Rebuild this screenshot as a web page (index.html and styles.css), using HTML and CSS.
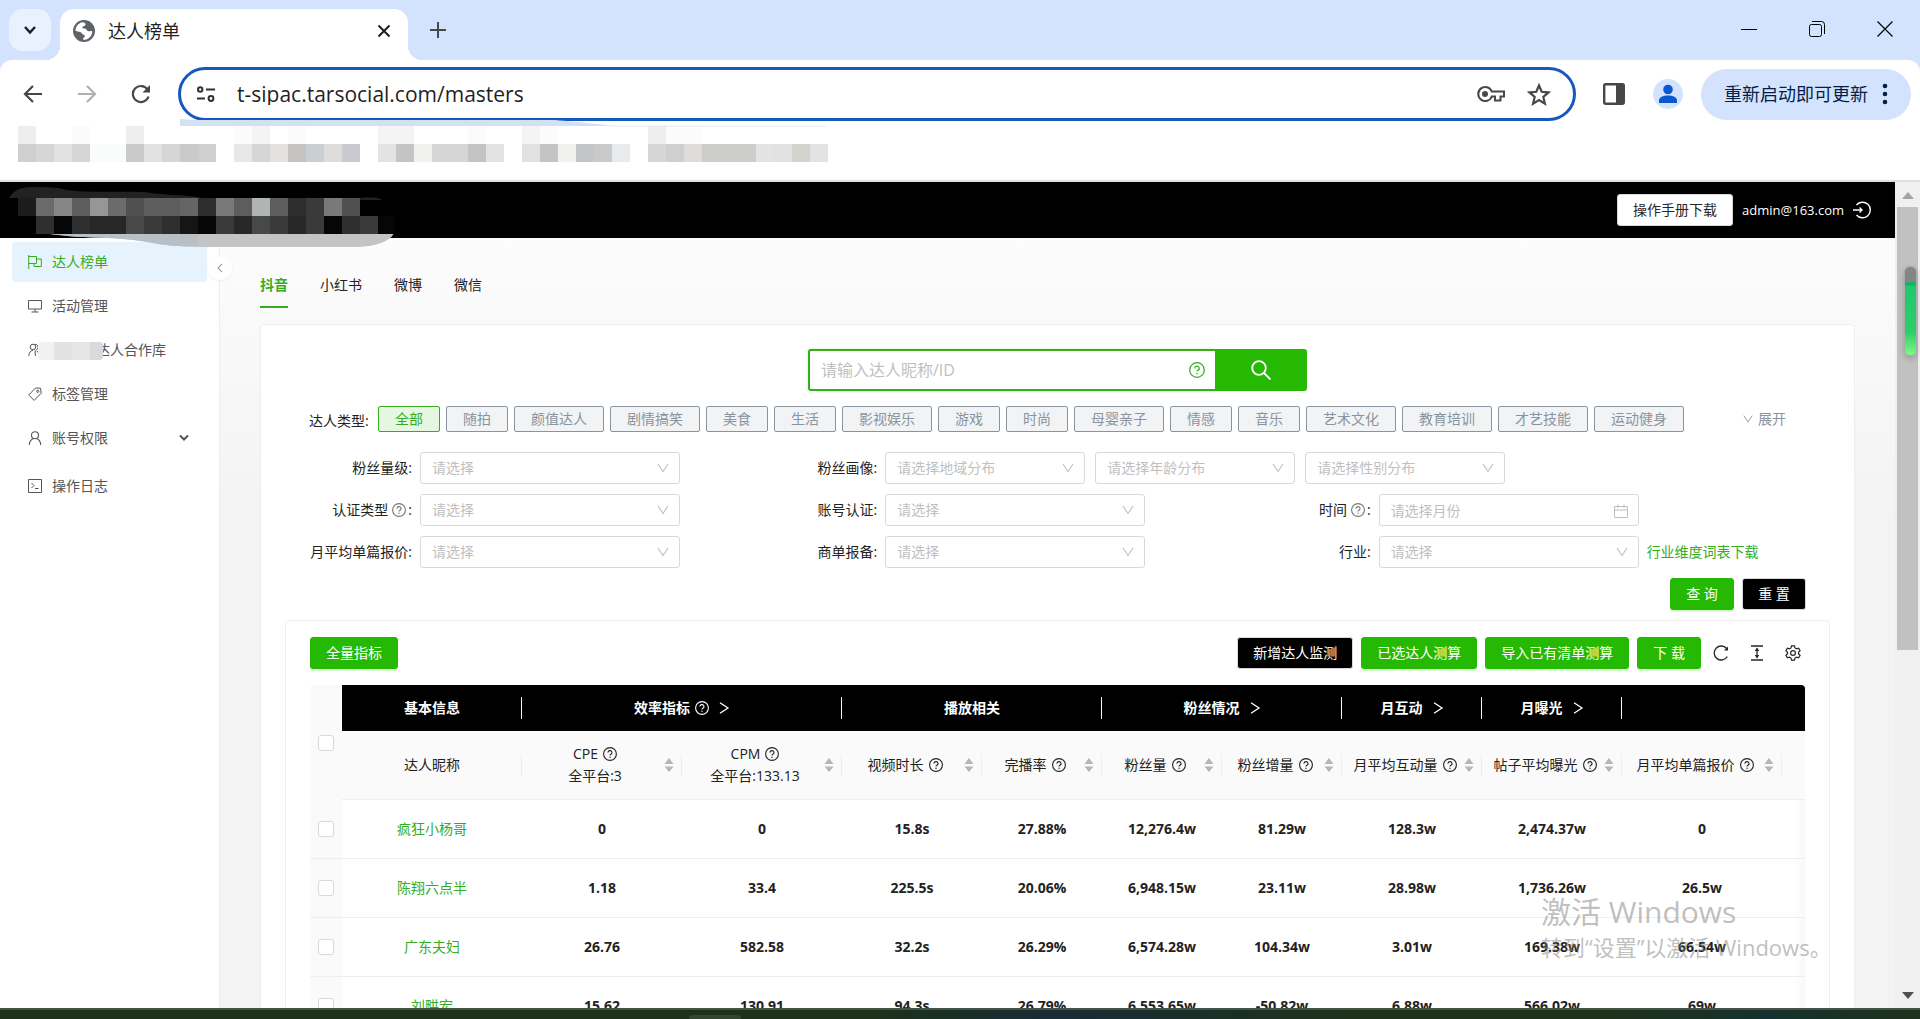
FILE: index.html
```html
<!DOCTYPE html>
<html lang="zh-CN">
<head>
<meta charset="utf-8">
<title>达人榜单</title>
<link rel="stylesheet" href="styles.css">
</head>
<body>
<svg class="defs" aria-hidden="true">
  <symbol id="help" viewBox="0 0 14 14"><circle cx="7" cy="7" r="6.4" fill="none" stroke="currentColor" stroke-width="1.1"/><path d="M5 5.6a2 1.9 0 1 1 2.9 1.6c-.6.3-.9.6-.9 1.2" fill="none" stroke="currentColor" stroke-width="1.1"/><circle cx="7" cy="10.3" r=".7" fill="currentColor"/></symbol>
  <symbol id="down" viewBox="0 0 12 12"><path d="M1 2l5 7.600 5-7.600" fill="none" stroke="currentColor" stroke-width="1.1"/></symbol>
  <symbol id="right" viewBox="0 0 12 12"><path d="M2 .8L10 6l-8 5.200" fill="none" stroke="currentColor" stroke-width="1.3"/></symbol>
  <symbol id="sort" viewBox="0 0 10 16"><path d="M5 1l4.500 6h-9zM5 15l4.500-5.500h-9z" fill="#b5b5b5"/></symbol>
</svg>

<div class="tabstrip">
  <button class="tab-search" aria-label="搜索标签页"><svg width="14" height="10" viewBox="0 0 14 10"><path d="M2 2l5 5.500L12 2" fill="none" stroke="#1f1f1f" stroke-width="2.500"/></svg></button>
  <div class="browser-tab">
    <svg width="22" height="22" viewBox="0 0 22 22"><circle cx="11" cy="11" r="11" fill="#5f6368"/><path d="M9.500 2.200c3 .6 3.700 1.800 2.500 3.200-.9 1-2.600.6-2.600 2.100 0 1.600 2.600.6 3.900 1.700.9.800.5 2 2.200 2 1.500 0 2.500-.8 3.800.2-.2 4.500-4 8.400-8.600 8.400-1.200-.3-.8-1.500.2-2.300 1.700-1.200.9-2.700-.7-3.100-1.500-.4-1.400-2-3-2.500-1.300-.4-3.100.2-4.800-1.300C2.800 6 5.600 2.800 9.500 2.200z" fill="#fff"/></svg>
    <span class="tab-title">达人榜单</span>
    <button class="icon-btn" aria-label="关闭标签页"><svg width="14" height="14" viewBox="0 0 14 14"><path d="M1.500 1.500l11 11M12.500 1.500l-11 11" stroke="#1f1f1f" stroke-width="2"/></svg></button>
  </div>
  <button class="new-tab" aria-label="新标签页"><svg width="16" height="16" viewBox="0 0 16 16"><path d="M8 0v16M0 8h16" stroke="#474747" stroke-width="2"/></svg></button>
  <div class="win-controls">
    <button aria-label="最小化"><svg width="16" height="16" viewBox="0 0 16 16"><path d="M0 8.500h16" stroke="#000"/></svg></button>
    <button aria-label="还原"><svg width="16" height="16" viewBox="0 0 16 16"><rect x=".5" y="3.500" width="12" height="12" rx="2" fill="none" stroke="#000"/><path d="M3 .5h9.500a3 3 0 0 1 3 3V13" fill="none" stroke="#000"/></svg></button>
    <button aria-label="关闭"><svg width="16" height="16" viewBox="0 0 16 16"><path d="M.5.500l15 15M15.500.500l-15 15" stroke="#000" stroke-width="1.200"/></svg></button>
  </div>
</div>

<div class="browser-bar">
  <div class="toolbar">
    <button class="nav-btn" aria-label="后退"><svg width="20" height="18" viewBox="0 0 20 18"><path d="M19 9H2M10 1L2 9l8 8" fill="none" stroke="#474747" stroke-width="2.200"/></svg></button>
    <button class="nav-btn" aria-label="前进"><svg width="20" height="18" viewBox="0 0 20 18"><path d="M1 9h17M10 1l8 8-8 8" fill="none" stroke="#b0b0b0" stroke-width="2.200"/></svg></button>
    <button class="nav-btn" aria-label="重新加载"><svg width="20" height="20" viewBox="0 0 20 20"><path d="M17.500 12.500A8 8 0 1 1 16.500 5.500" fill="none" stroke="#474747" stroke-width="2.200"/><path d="M19 1v7.500h-7.500z" fill="#474747"/></svg></button>
    <div class="omnibox">
      <svg width="18" height="18" viewBox="0 0 18 18" fill="none" stroke="#303030" stroke-width="2"><circle cx="3.200" cy="4.500" r="2.200"/><path d="M9 4.500h9M0 13.500h8"/><circle cx="14" cy="13.500" r="2.400"/></svg>
      <input class="url" type="text" aria-label="地址" value="t-sipac.tarsocial.com/masters">
      <button class="icon-btn" aria-label="密码"><svg width="28" height="18" viewBox="0 0 28 18"><path d="M14.800 6.500A7 7 0 1 0 14.800 11.500H18v4h5.500v-4H27v-5z" fill="none" stroke="#474747" stroke-width="2"/><circle cx="8" cy="9" r="3" fill="#474747"/></svg></button>
      <button class="icon-btn" aria-label="收藏"><svg width="24" height="23" viewBox="0 0 24 23"><path d="M12 2.500l2.700 6.300 6.800.6-5.200 4.500 1.600 6.700-5.900-3.600-5.900 3.600 1.600-6.700L2.500 9.400l6.800-.6z" fill="none" stroke="#474747" stroke-width="2.200"/></svg></button>
    </div>
    <button class="nav-btn" aria-label="侧边栏"><svg width="22" height="22" viewBox="0 0 22 22"><rect x="1.200" y="1.200" width="19.600" height="19.600" rx="1.500" fill="none" stroke="#474747" stroke-width="2.400"/><path d="M13 1h8v20h-8z" fill="#474747"/></svg></button>
    <button class="nav-btn" aria-label="个人资料"><svg width="30" height="30" viewBox="0 0 30 30"><circle cx="15" cy="15" r="15" fill="#d3e3fd"/><circle cx="15" cy="10.500" r="4.800" fill="#0b57d0"/><path d="M6 24v-2.500C6 18 10 16.500 15 16.500s9 1.500 9 5V24z" fill="#0b57d0"/></svg></button>
    <button class="update-pill"><span>重新启动即可更新</span><svg width="6" height="22" viewBox="0 0 6 22" fill="#041e49"><circle cx="3" cy="3" r="2.300"/><circle cx="3" cy="11" r="2.300"/><circle cx="3" cy="19" r="2.300"/></svg></button>
  </div>
  <div class="bookmarks">
    <svg width="810" height="36" viewBox="0 0 45 2" preserveAspectRatio="none" shape-rendering="crispEdges" aria-hidden="true">
      <path fill="#eee" d="M0 0h1v1H0zM6 0h1v1H6zM35 0h1v1h-1z"/><path fill="#f4f4f4" d="M13 0h1v1h-1zM20 0h2v1h-2zM28 0h1v1h-1z"/><path fill="#fbfbfb" d="M3 0h1v1H3zM12 0h1v1h-1zM15 0h1v1h-1zM25 0h1v1h-1zM29 0h1v1h-1zM36 0h2v1h-2z"/>
      <path fill="#cfcfcf" d="M0 1h1v1H0zM10 1h1v1h-1zM36 1h1v1h-1z"/><path fill="#d6d6d6" d="M1 1h1v1H1zM3 1h1v1H3zM8 1h1v1H8zM13 1h1v1h-1zM23 1h2v1h-2zM35 1h1v1h-1z"/><path fill="#e1e1e1" d="M2 1h1v1H2zM7 1h1v1H7zM28 1h1v1h-1zM42 1h1v1h-1z"/><path fill="#fafcfb" d="M4 1h2v1H4z"/><path fill="#cacaca" d="M6 1h1v1H6zM9 1h1v1H9zM32 1h1v1h-1z"/><path fill="#e7e7e7" d="M12 1h1v1h-1z"/><path fill="#e4e2df" d="M14 1h1v1h-1z"/><path fill="#c6c4c2" d="M15 1h1v1h-1z"/><path fill="#cacfd3" d="M16 1h1v1h-1z"/><path fill="#dfdddb" d="M17 1h1v1h-1zM37 1h1v1h-1z"/><path fill="#c9cacf" d="M18 1h1v1h-1z"/><path fill="#e3e3e3" d="M20 1h1v1h-1z"/><path fill="#c4c4c4" d="M21 1h1v1h-1zM25 1h1v1h-1zM29 1h1v1h-1z"/><path fill="#f1f1ee" d="M22 1h1v1h-1zM30 1h1v1h-1z"/><path fill="#e2e3e5" d="M26 1h1v1h-1zM41 1h1v1h-1zM44 1h1v1h-1z"/><path fill="#c3c5c9" d="M31 1h1v1h-1z"/><path fill="#e7ebee" d="M33 1h1v1h-1z"/><path fill="#cdcdcc" d="M38 1h3v1h-3z"/><path fill="#d4d3d0" d="M43 1h1v1h-1z"/>
    </svg>
  </div>
  <svg class="smudge" width="650" height="8" viewBox="0 0 650 8" aria-hidden="true"><path d="M0 0l15 1h360c25 2 50 5 60 6H0z" fill="#d3e1f5"/><path d="M430 7h216" stroke="#e8eaed"/></svg>
</div>

<div class="viewport">
  <div class="page">
    <header class="app-header">
      <svg class="logo-mosaic" width="396" height="66" viewBox="0 0 396 66" aria-hidden="true">
        <path d="M9 16C14 8 20 5 34 5c14 0 24 0 32 3 24 3 52 1 78 2 18 3 38 3 54 5 18 4 34 2 34 3l150 0c-2-3-18-3-26-1z" fill="#222"/>
        <path d="M24 51c20-1 40 4 60 4 26 1 52 2 74 7 20 3 40 3 60 3h140c18-1 32-5 36-14z" fill="#c4c4c4"/>
        <path d="M24 51c20-1 40 4 60 4 26 1 52 2 74 7 20 3 30 2 40 2V51z" fill="#b7bfc7"/>
        <g shape-rendering="crispEdges"><path fill="#1c1c1c" d="M18 16h18v18H18z"/><path fill="#6b6b6b" d="M36 16h18v18H36zM108 16h18v18h-18z"/><path fill="#868686" d="M54 16h18v18H54z"/><path fill="#5d5d5d" d="M72 16h18v18H72zM144 16h18v18h-18zM162 16h18v18h-18zM234 16h18v18h-18zM270 16h18v18h-18z"/><path fill="#969696" d="M90 16h18v18H90z"/><path fill="#505050" d="M126 16h18v18h-18zM342 16h18v18h-18z"/><path fill="#656565" d="M180 16h18v18h-18z"/><path fill="#2d2d2d" d="M198 16h18v18h-18zM288 16h18v18h-18z"/><path fill="#797979" d="M216 16h18v18h-18zM324 16h18v18h-18z"/><path fill="#b0b4b2" d="M252 16h18v18h-18z"/><path fill="#3a3a3a" d="M306 16h18v18h-18z"/>
        <path fill="#000" d="M18 34h378v17H18z"/><path fill="#2f2f2f" d="M36 34h18v18H36zM72 34h18v18H72zM162 34h18v18h-18zM342 34h18v18h-18z" /><path fill="#272727" d="M90 34h36v18H90zM234 34h18v18h-18zM288 34h18v18h-18z"/><path fill="#484848" d="M126 34h18v18h-18zM252 34h18v18h-18z"/><path fill="#3a3a3a" d="M144 34h18v18h-18zM216 34h18v18h-18zM270 34h18v18h-18zM306 34h18v18h-18zM360 34h18v18h-18z"/><path fill="#060606" d="M54 34h18v18H54zM198 34h18v18h-18zM324 34h18v18h-18zM378 34h16v18h-16z"/><path fill="#151515" d="M180 34h18v18h-18z"/></g>
      </svg>
      <button class="btn btn-plain">操作手册下载</button>
      <span class="user">admin@163.com</span>
      <button class="icon-btn" aria-label="退出登录"><svg width="18" height="18" viewBox="0 0 18 18" fill="none" stroke="#fff" stroke-width="1.400"><path d="M3.500 4A7.800 7.800 0 1 1 3.500 14"/><path d="M0 9h9M6.500 6.500L9 9l-2.500 2.500"/></svg></button>
    </header>
    <div class="layout">
      <aside class="sidebar">
        <nav>
          <a class="item active" href="#"><svg width="14" height="14" viewBox="0 0 14 14" fill="none" stroke="currentColor"><path d="M.7 0v14M.7 1.500h7.800v7H.7M8.500 4h4.800v7.500H6V8.500"/></svg>达人榜单</a>
          <a class="item" href="#"><svg width="14" height="14" viewBox="0 0 14 14" fill="none" stroke="currentColor"><path d="M.5 1.500h13v8.500H.5zM7 10v3M3.500 13h7"/></svg>活动管理</a>
          <a class="item covered" href="#"><svg width="14" height="14" viewBox="0 0 14 14" fill="none" stroke="currentColor"><circle cx="5" cy="4" r="2.800"/><path d="M.8 13c.2-3.500 1.800-5.500 4-5.500M7 1.200a3 3 0 0 1 2.500 4.800c-1 1.200-2.500 1.500-2.500 3s.5 2.500.5 4M9 8l3 4"/></svg><i class="cover"></i>达人合作库</a>
          <a class="item" href="#"><svg width="14" height="14" viewBox="0 0 14 14" fill="none" stroke="currentColor"><path d="M7.500 1l5 .2.700 5-7 7.200L.7 8z"/><circle cx="9.800" cy="4.300" r="1.100"/></svg>标签管理</a>
          <a class="item" href="#"><svg width="14" height="14" viewBox="0 0 14 14" fill="none" stroke="currentColor" stroke-width="1.100"><circle cx="7" cy="4.200" r="3.500"/><path d="M1.300 14c0-3.500 2-5.500 4-6.500M12.700 14c0-3.500-2-5.500-4-6.500"/></svg>账号权限<svg class="expand" width="10" height="8" viewBox="0 0 10 8"><path d="M1 1.500l4 4 4-4" fill="none" stroke="currentColor" stroke-width="2"/></svg></a>
          <a class="item log" href="#"><svg width="14" height="14" viewBox="0 0 14 14" fill="none" stroke="currentColor"><path d="M.5.500h13v13H.5zM3.500 4l2.500 2.500L3.500 9M7 9.500h3.500"/></svg>操作日志</a>
        </nav>
        <button class="collapse" aria-label="收起"><svg width="6" height="10" viewBox="0 0 6 10"><path d="M5 .8L1 5l4 4.200" fill="none" stroke="#a5a5a5" stroke-width="1.200"/></svg></button>
      </aside>
      <main class="main">
        <nav class="tabs"><a class="on" href="#">抖音</a><a href="#">小红书</a><a href="#">微博</a><a href="#">微信</a></nav>
        <section class="card">
          <form class="filters">
            <div class="search">
              <div class="search-box"><input type="text" placeholder="请输入达人昵称/ID" aria-label="请输入达人昵称/ID"><svg width="16" height="16"><use href="#help"/></svg></div>
              <button type="button" class="search-btn" aria-label="搜索"><svg width="20" height="20" viewBox="0 0 20 20" fill="none" stroke="#fff" stroke-width="1.800"><circle cx="8" cy="8" r="6.800"/><path d="M13 13l6.500 6.500"/></svg></button>
            </div>
            <div class="cats">
              <span class="cats-label">达人类型:</span>
              <button type="button" class="tag on">全部</button><button type="button" class="tag">随拍</button><button type="button" class="tag">颜值达人</button><button type="button" class="tag">剧情搞笑</button><button type="button" class="tag">美食</button><button type="button" class="tag">生活</button><button type="button" class="tag">影视娱乐</button><button type="button" class="tag">游戏</button><button type="button" class="tag">时尚</button><button type="button" class="tag">母婴亲子</button><button type="button" class="tag">情感</button><button type="button" class="tag">音乐</button><button type="button" class="tag">艺术文化</button><button type="button" class="tag">教育培训</button><button type="button" class="tag">才艺技能</button><button type="button" class="tag">运动健身</button>
              <button type="button" class="more"><svg width="10" height="10"><use href="#down"/></svg>展开</button>
            </div>
            <div class="grid">
              <div class="field"><label for="f1">粉丝量级:</label><span class="select"><select id="f1"><option>请选择</option></select><svg width="12" height="12"><use href="#down"/></svg></span></div>
              <div class="field wide"><label for="f2">粉丝画像:</label>
                <span class="select short"><select id="f2"><option>请选择地域分布</option></select><svg width="12" height="12"><use href="#down"/></svg></span>
                <span class="select short"><select aria-label="年龄分布"><option>请选择年龄分布</option></select><svg width="12" height="12"><use href="#down"/></svg></span>
                <span class="select short"><select aria-label="性别分布"><option>请选择性别分布</option></select><svg width="12" height="12"><use href="#down"/></svg></span></div>
              <div class="field"><label for="f3">认证类型<svg class="q" width="14" height="14"><use href="#help"/></svg>:</label><span class="select"><select id="f3"><option>请选择</option></select><svg width="12" height="12"><use href="#down"/></svg></span></div>
              <div class="field"><label for="f4">账号认证:</label><span class="select"><select id="f4"><option>请选择</option></select><svg width="12" height="12"><use href="#down"/></svg></span></div>
              <div class="field"><label for="f5">时间<svg class="q" width="14" height="14"><use href="#help"/></svg>:</label><span class="select"><input id="f5" type="text" placeholder="请选择月份"><svg width="14" height="14" viewBox="0 0 14 14" fill="none" stroke="currentColor"><path d="M.5 2.500h13v11H.5zM.5 6h13M4 .5V4M10 .5V4"/></svg></span></div>
              <div class="field"><label for="f6">月平均单篇报价:</label><span class="select"><select id="f6"><option>请选择</option></select><svg width="12" height="12"><use href="#down"/></svg></span></div>
              <div class="field"><label for="f7">商单报备:</label><span class="select"><select id="f7"><option>请选择</option></select><svg width="12" height="12"><use href="#down"/></svg></span></div>
              <div class="field"><label for="f8">行业:</label><span class="select"><select id="f8"><option>请选择</option></select><svg width="12" height="12"><use href="#down"/></svg></span><a class="green-link" href="#">行业维度词表下载</a></div>
            </div>
            <div class="actions"><button type="button" class="btn btn-green">查 询</button><button type="button" class="btn btn-black">重 置</button></div>
          </form>
          <section class="table-card">
            <div class="table-tools">
              <button class="btn btn-green first">全量指标</button>
              <button class="btn btn-black">新增达人监测</button>
              <button class="btn btn-green">已选达人测算</button>
              <button class="btn btn-green">导入已有清单测算</button>
              <button class="btn btn-green">下 载</button>
              <div class="tools">
              <button class="tool" aria-label="刷新"><svg width="16" height="16" viewBox="0 0 16 16"><path d="M14.300 11.500A7 7 0 1 1 13.600 3.500" fill="none" stroke="#262626" stroke-width="1.300"/><path d="M15 1.500v4h-4z" fill="#262626"/></svg></button>
              <button class="tool" aria-label="密度"><svg width="14" height="16" viewBox="0 0 14 16"><path d="M1 1h12M1 15h12M7 3.500v9" fill="none" stroke="#262626" stroke-width="1.300"/><path d="M7 2.500L9.300 6H4.700zM7 13.500L9.300 10H4.700z" fill="#262626"/></svg></button>
              <button class="tool" aria-label="列设置"><svg width="16" height="16" viewBox="0 0 16 16" fill="none" stroke="#262626" stroke-width="1.200"><path d="M6.500.8h3l.5 2.100 1.500.9 2.100-.7 1.500 2.600L13.500 7.200v1.600l1.600 1.500-1.500 2.600-2.100-.7-1.500.9-.5 2.100h-3L6 13.100l-1.500-.9-2.100.7-1.500-2.600 1.600-1.500V7.200L.9 5.700l1.500-2.600 2.100.7L6 2.900z"/><circle cx="8" cy="8" r="2.400"/></svg></button>
              </div>
            </div>
            <table>
              <colgroup><col class="c32"><col class="c180"><col class="c160"><col class="c160"><col class="c140"><col class="c120"><col class="c120"><col class="c120"><col class="c140"><col class="c140"><col class="c160"><col></colgroup>
              <thead>
                <tr class="groups">
                  <th class="check" rowspan="2"><input type="checkbox" aria-label="全选"></th>
                  <th>基本信息</th><th colspan="2">效率指标<svg class="q" width="14" height="14"><use href="#help"/></svg><svg class="go" width="12" height="12"><use href="#right"/></svg></th><th colspan="2">播放相关</th><th colspan="2">粉丝情况<svg class="go" width="12" height="12"><use href="#right"/></svg></th><th>月互动<svg class="go" width="12" height="12"><use href="#right"/></svg></th><th>月曝光<svg class="go" width="12" height="12"><use href="#right"/></svg></th><th colspan="2" class="last"></th>
                </tr>
                <tr class="cols">
                  <th>达人昵称</th>
                  <th><div class="h"><span>CPE<svg class="q" width="14" height="14"><use href="#help"/></svg><br>全平台:3</span><svg width="10" height="16"><use href="#sort"/></svg></div></th>
                  <th><div class="h"><span>CPM<svg class="q" width="14" height="14"><use href="#help"/></svg><br>全平台:133.13</span><svg width="10" height="16"><use href="#sort"/></svg></div></th>
                  <th><div class="h"><span>视频时长<svg class="q" width="14" height="14"><use href="#help"/></svg></span><svg width="10" height="16"><use href="#sort"/></svg></div></th>
                  <th><div class="h"><span>完播率<svg class="q" width="14" height="14"><use href="#help"/></svg></span><svg width="10" height="16"><use href="#sort"/></svg></div></th>
                  <th><div class="h"><span>粉丝量<svg class="q" width="14" height="14"><use href="#help"/></svg></span><svg width="10" height="16"><use href="#sort"/></svg></div></th>
                  <th><div class="h"><span>粉丝增量<svg class="q" width="14" height="14"><use href="#help"/></svg></span><svg width="10" height="16"><use href="#sort"/></svg></div></th>
                  <th><div class="h"><span>月平均互动量<svg class="q" width="14" height="14"><use href="#help"/></svg></span><svg width="10" height="16"><use href="#sort"/></svg></div></th>
                  <th><div class="h"><span>帖子平均曝光<svg class="q" width="14" height="14"><use href="#help"/></svg></span><svg width="10" height="16"><use href="#sort"/></svg></div></th>
                  <th><div class="h"><span>月平均单篇报价<svg class="q" width="14" height="14"><use href="#help"/></svg></span><svg width="10" height="16"><use href="#sort"/></svg></div></th>
                  <th class="last"></th>
                </tr>
              </thead>
              <tbody>
                <tr><td class="check"><input type="checkbox" aria-label="选择疯狂小杨哥"></td><td><a href="#">疯狂小杨哥</a></td><td>0</td><td>0</td><td>15.8s</td><td>27.88%</td><td>12,276.4w</td><td>81.29w</td><td>128.3w</td><td>2,474.37w</td><td>0</td><td class="edge"></td></tr>
                <tr><td class="check"><input type="checkbox" aria-label="选择陈翔六点半"></td><td><a href="#">陈翔六点半</a></td><td>1.18</td><td>33.4</td><td>225.5s</td><td>20.06%</td><td>6,948.15w</td><td>23.11w</td><td>28.98w</td><td>1,736.26w</td><td>26.5w</td><td class="edge"></td></tr>
                <tr><td class="check"><input type="checkbox" aria-label="选择广东夫妇"></td><td><a href="#">广东夫妇</a></td><td>26.76</td><td>582.58</td><td>32.2s</td><td>26.29%</td><td>6,574.28w</td><td>104.34w</td><td>3.01w</td><td>169.38w</td><td>66.54w</td><td class="edge"></td></tr>
                <tr><td class="check"><input type="checkbox" aria-label="选择刘畊宏"></td><td><a href="#">刘畊宏</a></td><td>15.62</td><td>130.91</td><td>94.3s</td><td>26.79%</td><td>6,553.65w</td><td>-50.82w</td><td>6.88w</td><td>566.02w</td><td>69w</td><td class="edge"></td></tr>
              </tbody>
            </table>
          </section>
        </section>
      </main>
    </div>
  </div>
  <div class="scrollbar">
    <svg width="12" height="7" viewBox="0 0 12 7"><path d="M6 0l6 7H0z" fill="#a3a3a3"/></svg>
    <div class="track"><div class="thumb"></div></div>
    <svg width="12" height="7" viewBox="0 0 12 7"><path d="M6 7l6-7H0z" fill="#505050"/></svg>
    <div class="gauge"></div>
  </div>
  <div class="activate"><p>激活 Windows</p><p>转到“设置”以激活 Windows。</p></div>
</div>
<div class="taskbar"><i></i></div>
</body>
</html>
```

FILE: styles.css
```css
* { box-sizing: border-box; }
body {
  margin: 0;
  height: 100vh;
  display: flex;
  flex-direction: column;
  overflow: hidden;
  background: #d3e3fd;
  color: #222;
  font: 14px/22px "Open Sans", "Noto Sans CJK SC", sans-serif;
}
button, input, select { font: inherit; color: inherit; }
button { margin: 0; padding: 0; border: 0; background: none; }
input { outline: 0; }
a { color: inherit; text-decoration: none; }
svg { flex: none; }
.defs { position: absolute; width: 0; height: 0; }

/* browser frame */
.tabstrip { display: flex; flex: none; height: 60px; padding: 9px 1px 0 9px; }
.tab-search { width: 42px; height: 42px; border-radius: 14px; background: #eaf1fe; }
.tab-search svg, .new-tab svg, .win-controls svg, .search-btn svg { display: block; margin: 0 auto; }
.browser-tab {
  position: relative;
  display: flex;
  align-items: center;
  width: 348px;
  margin-left: 9px;
  padding: 0 17px 8px 13px;
  border-radius: 14px 14px 0 0;
  background: #fff;
}
.browser-tab::before, .browser-tab::after {
  content: "";
  position: absolute;
  bottom: 0;
  width: 14px;
  height: 14px;
}
.browser-tab::before { left: -14px; background: radial-gradient(circle at 0 0, transparent 14px, #fff 14px); }
.browser-tab::after { right: -14px; background: radial-gradient(circle at 100% 0, transparent 14px, #fff 14px); }
.tab-title { flex: 1; margin-left: 13px; font-size: 18px; color: #1f1f1f; }
.icon-btn { display: flex; align-items: center; }
.new-tab { width: 60px; height: 42px; }
.win-controls { display: flex; height: 40px; margin-left: auto; }
.win-controls button { width: 68px; }

.browser-bar { position: relative; flex: none; border-bottom: 2px solid #dfdfdf; border-radius: 12px 12px 0 0; background: #fff; }
.toolbar { display: flex; align-items: center; height: 66px; padding: 2px 9px 0 6px; }
.nav-btn { display: flex; align-items: center; justify-content: center; width: 54px; height: 54px; }
.omnibox {
  display: flex;
  align-items: center;
  flex: 1;
  height: 54px;
  margin: 0 11px 0 10px;
  padding: 0 22px 0 16px;
  gap: 22px;
  border: 3px solid #1659bd;
  border-radius: 27px;
}
.url { flex: 1; min-width: 0; padding: 0; border: 0; font-size: 21px; color: #1f1f1f; }
.update-pill {
  display: flex;
  align-items: center;
  justify-content: space-between;
  width: 210px;
  height: 51px;
  margin-left: 6px;
  padding: 0 23px;
  border-radius: 26px;
  background: #d3e3fd;
  color: #041e49;
  font-size: 18px;
}
.bookmarks { height: 54px; padding-left: 18px; }
.bookmarks svg { display: block; }
.smudge { position: absolute; left: 180px; top: 59px; }

/* page frame */
.viewport { position: relative; display: flex; flex: 1; min-height: 0; }
.page { display: flex; flex-direction: column; flex: 1; min-width: 0; overflow: hidden; background: #fff; }
.app-header {
  position: relative;
  z-index: 2;
  display: flex;
  flex: none;
  align-items: center;
  justify-content: flex-end;
  height: 56px;
  padding-right: 24px;
  gap: 9px;
  background: #000;
  color: #fff;
}
.user { font-size: 13px; }
.logo-mosaic { position: absolute; left: 0; top: 0; }
.btn { height: 32px; padding: 0 15px; border: 1px solid transparent; border-radius: 3px; line-height: 20px; white-space: pre; }
.btn-plain { background: #fff; border-color: #d9d9d9; color: #262626; }
.btn-green { background: #26b904; border-color: #26b904; color: #fff; box-shadow: 0 2px 1px #d8f7d0; }
.btn-black { background: #000; border-color: #d9d9d9; color: #fff; }
.layout { display: flex; flex: 1; min-height: 0; }
.sidebar { position: relative; flex: none; width: 220px; padding: 4px 12px; border-right: 1px solid #eee; background: #fff; }
.item { position: relative; display: flex; align-items: center; height: 40px; margin-bottom: 4px; padding-left: 16px; gap: 10px; border-radius: 4px; color: #555; }
.item.active { background: #e6f3fd; color: #35ad1f; }
.item.covered { padding-right: 41px; justify-content: space-between; }
.item.log { margin-top: 8px; }
.cover { position: absolute; left: 26px; top: 12px; width: 65px; height: 18px; border-radius: 3px; background: linear-gradient(90deg, #f1f1f1 16px, #e2e2e2 16px 34px, #e6e6e6 34px 52px, #dadada 52px); }
.expand { margin: 0 18px 0 auto; }
.collapse { position: absolute; right: -13px; top: 18px; width: 24px; height: 24px; border-radius: 50%; background: #fff; box-shadow: 0 1px 3px rgba(0, 0, 0, .06); display: flex; align-items: center; justify-content: center; }
.main { flex: 1; min-width: 0; padding: 24px 40px 0; background: linear-gradient(#fcfcfc, #f3f3f3 280px); }
.tabs { display: flex; gap: 32px; height: 46px; margin-bottom: 16px; }
.tabs a { padding-top: 12px; }
.tabs .on { color: #35ad1f; font-weight: 600; border-bottom: 2px solid #35ad1f; }
.card { padding: 24px; border: 1px solid #eee; border-radius: 4px; background: #fff; }

/* filters */
.filters { padding: 0 24px; }
.search { display: flex; width: 499px; height: 42px; margin: 0 auto 15px; }
.search-box { display: flex; align-items: center; flex: 1; padding: 0 10px 0 11px; border: 2px solid #35ad1f; border-right: 0; border-radius: 3px 0 0 3px; color: #35ad1f; box-shadow: 0 0 3px #bdf0b0; }
.search-box input { flex: 1; min-width: 0; padding: 0; border: 0; font-size: 16px; }
input::placeholder { color: #bfbfbf; opacity: 1; }
.search-btn { width: 92px; border-radius: 0 3px 3px 0; background: #26b904; }
.cats { display: flex; gap: 6px; margin-bottom: 20px; }
.cats-label { width: 63px; padding-top: 4px; white-space: nowrap; }
.tag { height: 26px; padding: 0 16px; border: 1px solid #8a949e; border-radius: 2px; background: #f1f3f5; color: #8a949e; line-height: 24px; white-space: nowrap; }
.tag.on { border-color: #35ad1f; background: #e6f7e1; color: #35ad1f; }
.more { display: flex; align-items: center; gap: 5px; margin-left: auto; padding-right: 20px; color: #8a949e; }
.grid { display: grid; grid-template-columns: 465fr 493fr 538fr; row-gap: 10px; }
.field { display: flex; align-items: center; gap: 8px; white-space: nowrap; }
.field label { display: flex; flex: none; align-items: center; justify-content: flex-end; width: 103px; }
.field label .q { margin: 0 2px 0 4px; color: #777; }
.wide { grid-column: span 2; }
.select { position: relative; width: 260px; color: #bfbfbf; }
.select.short { width: 200px; }
.short + .short { margin-left: 2px; }
.select select, .select input { display: block; width: 100%; height: 32px; padding: 0 11px; border: 1px solid #d9d9d9; border-radius: 3px; background: #fff; appearance: none; line-height: 20px; }
.select svg { position: absolute; right: 11px; top: 10px; pointer-events: none; }
.green-link { color: #35ad1f; }
.actions { display: flex; justify-content: flex-end; gap: 8px; margin: 10px 0; }
.actions .btn { width: 64px; }

/* results */
.table-card { padding: 16px 24px; border: 1px solid #eee; border-radius: 4px; }
.table-tools { display: flex; gap: 8px; margin-bottom: 16px; padding-right: 4px; }
.table-tools .first { margin-right: auto; }
.tools { display: flex; gap: 20px; margin-left: 4px; }
.tool { display: flex; align-items: center; justify-content: center; width: 16px; }
table { width: 100%; border-collapse: separate; border-spacing: 0; table-layout: fixed; }
.c32 { width: 32px; } .c120 { width: 120px; } .c140 { width: 140px; } .c160 { width: 160px; } .c180 { width: 180px; }
th, td { position: relative; padding: 0 8px; text-align: center; white-space: nowrap; }
.groups th { height: 46px; background: #000; color: #fff; font-weight: 700; }
.cols th { height: 69px; border-bottom: 1px solid #eee; background: #fafafa; font-weight: 400; }
.groups th.check { background: #fafafa; border-radius: 4px 0 0; }
.groups th.last { border-radius: 0 4px 0 0; }
.groups th:not(.check):not(.last)::after, .cols th:not(.last)::after { content: ""; position: absolute; right: 0; top: 50%; width: 1px; height: 22px; margin-top: -11px; background: #fff; }
.cols th:not(.last)::after { background: #eee; }
th .q { vertical-align: -2px; margin-left: 5px; }
th .go { vertical-align: -1px; margin-left: 9px; }
.h { display: flex; align-items: center; gap: 4px; }
.h span { flex: 1; }
td { height: 59px; border-bottom: 1px solid #eee; background: #fff; font-weight: 700; }
td a { color: #35ad1f; font-weight: 400; }
td.check { background: #fafafa; }
td.edge { background: linear-gradient(90deg, #fff 50%, #f8f8f8); }
.check input { display: block; width: 16px; height: 16px; margin: 0; border: 1px solid #d9d9d9; border-radius: 3px; background: #fff; appearance: none; }

/* overlays and system bars */
.scrollbar { position: relative; display: flex; flex-direction: column; flex: none; align-items: center; width: 25px; padding: 10px 0 9px; background: #f0f0f0; }
.track { flex: 1; width: 21px; margin: 8px 0; }
.thumb { height: 57%; background: #c1c1c1; }
.gauge { position: absolute; top: 84px; right: 3px; width: 13px; height: 90px; border: 1px solid #aaa; border-radius: 6px; background: linear-gradient(#858585 15px, #16b364 15px 18px, #1fc96d 19px, #2cce68 65px, #7dfa82); box-shadow: 0 3px 6px rgba(0, 0, 0, .2); }
.activate { position: absolute; right: 91px; top: 710px; width: 288px; color: rgba(130, 130, 130, .52); pointer-events: none; white-space: nowrap; }
.activate p { margin: 0; font-size: 30px; line-height: 40px; }
.activate p + p { font-size: 22px; line-height: 30px; }
.taskbar { display: flex; flex: none; justify-content: center; height: 11px; padding: 5px 490px 0 0; border-top: 2px solid #475247; background: linear-gradient(90deg, #1c3219 45%, #172c35 55%, #1d321b 70%, #1d321b 84%, #15302f 92%, #1d321b); }
.taskbar i { width: 52px; border-radius: 5px 5px 0 0; background: #33472f; }
```
